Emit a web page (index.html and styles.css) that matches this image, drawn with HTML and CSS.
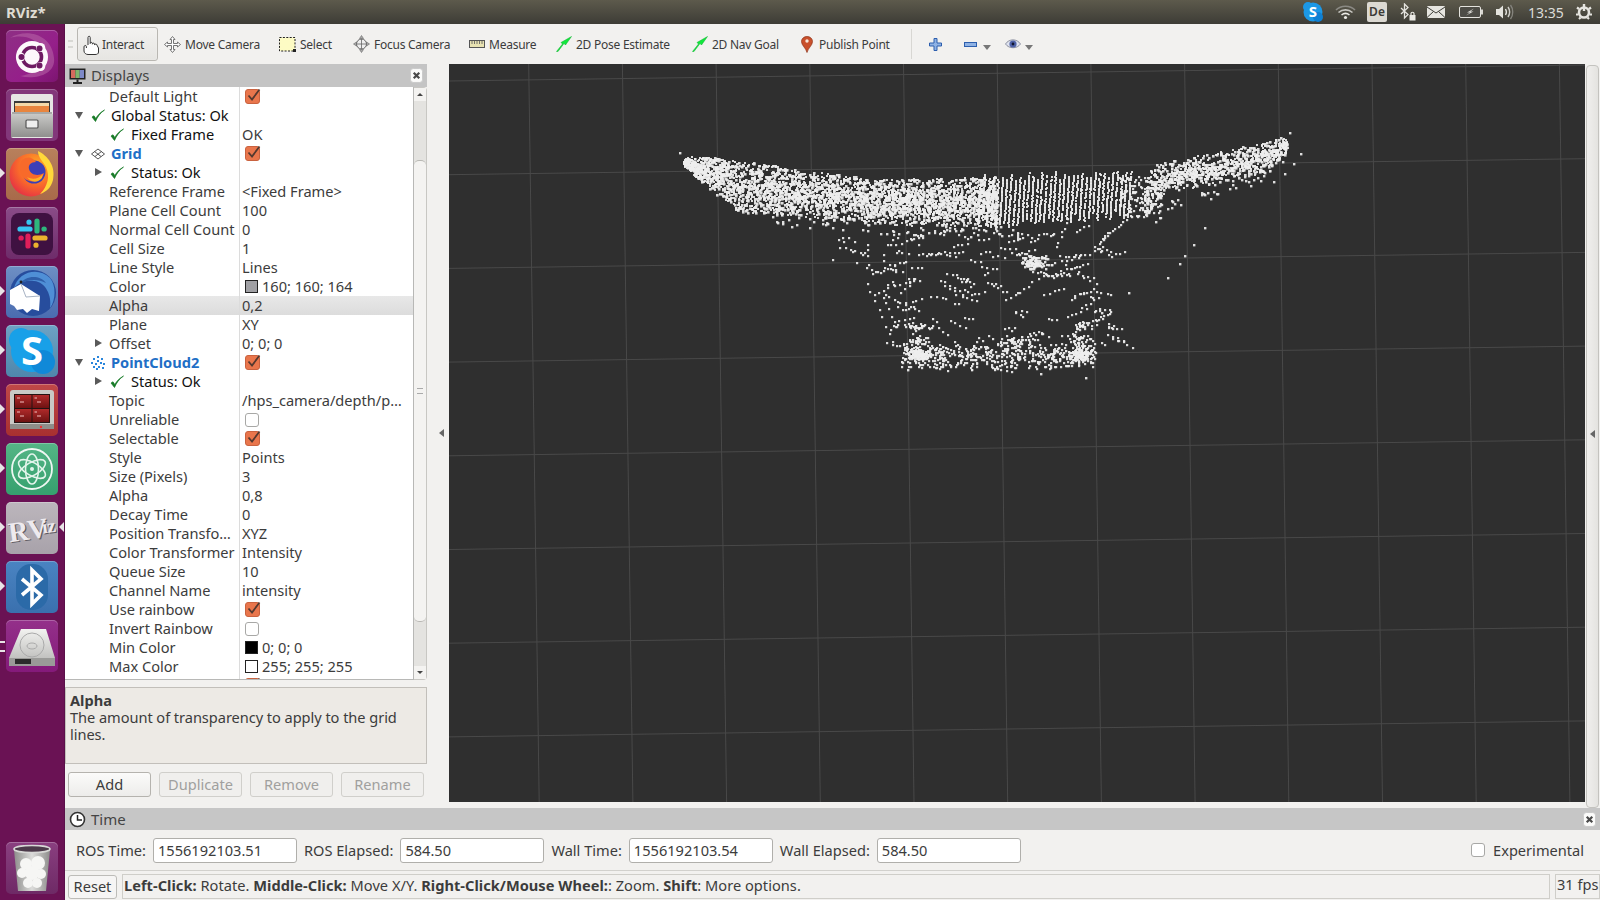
FILE: index.html
```html
<!DOCTYPE html>
<html lang="en">
<head>
<meta charset="utf-8">
<title>RViz*</title>
<link rel="stylesheet" href="styles.css">
</head>
<body>
<svg class="sprite" width="0" height="0" aria-hidden="true">
  <symbol id="cb-on" viewBox="0 0 16 16">
    <rect x="0.5" y="1.5" width="14" height="14" rx="2.5" fill="#e9764c" stroke="#c9623f"/>
    <path d="M3.5 7.5 L7 11.5 L14.5 1.5" fill="none" stroke="#54392f" stroke-width="1.8"/>
  </symbol>
  <symbol id="ok" viewBox="0 0 14 14">
    <path d="M1 8 L4.5 12.5 C6.5 8 9 4 13.5 1 C9 3.5 6.5 6.5 4.8 9.5 L3 6.8 Z" fill="#157a25" stroke="#157a25" stroke-width=".7"/>
  </symbol>
  <symbol id="close" viewBox="0 0 14 16">
    <rect x=".5" y=".5" width="13" height="15" rx="3" fill="#fbfbfa" stroke="#c8c8c8"/>
    <path d="M4 5 L10 11 M10 5 L4 11" stroke="#4a4a4a" stroke-width="2.4"/>
  </symbol>
  <symbol id="pose" viewBox="0 0 16 16">
    <path d="M0.5 15.5 L6.5 8 L5 6.5 L15.5 .5 L9.5 9 L8 7.5 L2 15.5 Z" fill="#11e83c" stroke="#0bb02c" stroke-width=".5"/>
  </symbol>
</svg>

<header class="topbar">
  <span class="wintitle">RViz*</span>
  <div class="tray">
    <svg class="tray-skype" width="22" height="22" viewBox="0 0 22 22"><circle cx="11" cy="11" r="9.5" fill="#1c98e6"/><circle cx="6" cy="6" r="5" fill="#1c98e6"/><circle cx="16" cy="16" r="5" fill="#0e80d4"/><text x="11" y="16" text-anchor="middle" class="svg-s">S</text></svg>
    <svg class="tray-wifi" width="21" height="16" viewBox="0 0 21 16"><g fill="none" stroke-width="1.6"><path d="M1 6 C6 1 15 1 20 6" stroke="#8b8a84"/><path d="M3.5 8.5 C7.5 5 13.5 5 17.5 8.5" stroke="#c8c7c2"/><path d="M6.5 11 C9 9 12 9 14.5 11" stroke="#ecebe6"/></g><circle cx="10.5" cy="13.5" r="1.6" fill="#ecebe6"/></svg>
    <span class="tray-lang">De</span>
    <svg class="tray-bt" width="16" height="18" viewBox="0 0 16 18"><path d="M1 5 L8 11.5 L4.5 15 V1 L8 4.5 L1 11" fill="none" stroke="#e4e3de" stroke-width="1.3"/><rect x="9.5" y="12" width="6" height="5.5" fill="#ecebe6"/><path d="M11 12 V10.5 C11 8.8 14 8.8 14 10.5 V12" fill="none" stroke="#ecebe6" stroke-width="1.2"/></svg>
    <svg class="tray-mail" width="18" height="12" viewBox="0 0 18 12"><rect width="18" height="12" rx="1" fill="#e6e5e0"/><path d="M0 1 L9 7 L18 1 M0 11.5 L6.5 5.5 M18 11.5 L11.5 5.5" fill="none" stroke="#3f3e38" stroke-width="1"/></svg>
    <svg class="tray-bat" width="24" height="12" viewBox="0 0 24 12"><rect x=".5" y=".5" width="21" height="11" rx="1.5" fill="#4d4c46" stroke="#e4e3de"/><rect x="22" y="3.5" width="2" height="5" fill="#d8d7d2"/><path d="M15 2.5 L8 6.5 L11 6.5 L7 9.5 L14.5 5.5 L11.5 5.5 Z" fill="#dcdbd6"/></svg>
    <svg class="tray-vol" width="19" height="16" viewBox="0 0 19 16"><path d="M1 5 H4 L8 1.5 V14.5 L4 11 H1 Z" fill="#e4e3de"/><g fill="none"><path d="M10.5 5 C11.7 7 11.7 9 10.5 11" stroke="#e4e3de" stroke-width="1.4"/><path d="M13 3 C15 6 15 10 13 13" stroke="#d0cfca" stroke-width="1.4"/><path d="M15.5 1 C18.5 5 18.5 11 15.5 15" stroke="#85847e" stroke-width="1.3"/></g></svg>
    <span class="clock">13:35</span>
    <svg class="tray-gear" width="16" height="16" viewBox="0 0 16 16"><circle cx="8" cy="8.5" r="5" fill="none" stroke="#e6e5e0" stroke-width="2.6"/><rect x="6.8" y="0" width="2.4" height="7" fill="#e6e5e0"/><path d="M1 3.5 L3 5 M15 3.5 L13 5 M0 10.5 H2 M14 10.5 H16 M3 15 L4.5 13.5 M13 15 L11.5 13.5" stroke="#e6e5e0" stroke-width="2.2"/></svg>
  </div>
</header>

<div class="desktop">
  <nav class="launcher">
    <div class="tile tile-ubuntu"><svg viewBox="0 0 52 52"><path d="M4 8 C20 -2 46 4 48 28 C50 44 30 50 14 46 C28 44 40 36 36 20 C32 8 16 4 4 8Z" fill="#b866a8" opacity=".55"/><circle cx="26" cy="27" r="16" fill="#fdf8fb"/><circle cx="26" cy="27" r="9.5" fill="none" stroke="#6e1a62" stroke-width="3.6"/><g fill="#fdf8fb"><circle cx="34.6" cy="17.5" r="4.6"/><circle cx="34.6" cy="36.5" r="4.6"/><circle cx="14.5" cy="27" r="4.6"/></g><g fill="#6e1a62"><circle cx="33.5" cy="18.5" r="3"/><circle cx="33.5" cy="35.5" r="3"/><circle cx="15.5" cy="27" r="3"/></g></svg></div>
    <div class="tile tile-files"><svg viewBox="0 0 52 52"><defs><linearGradient id="cab" x1="0" y1="0" x2="0" y2="1"><stop offset="0" stop-color="#c9c9c7"/><stop offset="1" stop-color="#8f8f8d"/></linearGradient></defs><rect x="5" y="5" width="42" height="44" rx="2" fill="#e6e6e4"/><rect x="8" y="12" width="36" height="12" fill="#3a3a3a"/><rect x="9" y="14" width="34" height="3" fill="#f4d9a8"/><rect x="9" y="17" width="34" height="6" fill="#e8853e"/><path d="M6 23 H46 L47 48 H5 Z" fill="#a9a9a7"/><rect x="5" y="25" width="42" height="23" fill="url(#cab)"/><rect x="20" y="31" width="12" height="8" rx="1" fill="#eee" stroke="#555" stroke-width="1.2"/></svg></div>
    <div class="tile tile-firefox running"><svg viewBox="0 0 52 52"><defs><radialGradient id="ff" cx=".65" cy=".3" r=".85"><stop offset="0" stop-color="#ffb022"/><stop offset=".55" stop-color="#f8662c"/><stop offset="1" stop-color="#e0224c"/></radialGradient></defs><circle cx="25" cy="27" r="21.5" fill="url(#ff)"/><path d="M32 3 C42 8 50 18 47 32 C45 40 40 44 34 46 C42 38 44 28 40 19 C37 13 32 10 32 3Z" fill="#ffd83a"/><circle cx="28" cy="24" r="11.5" fill="#3b3fb8"/><path d="M16 12 C22 8 26 9 30 14 C25 14 22 17 23 21 C25 28 33 28 38 25 C36 33 26 36 19 31 C13 26 12 17 16 12Z" fill="#f86a2a"/><path d="M21 29 C26 32 33 31 37 26 L36 30 C32 35 25 35 21 29Z" fill="#ffb125"/></svg></div>
    <div class="tile tile-slack"><svg viewBox="0 0 52 52"><rect x="5" y="6" width="42" height="42" rx="8" fill="#3f1141"/><g fill="none" stroke-width="5.2" stroke-linecap="round"><path d="M14 22 H24 M23 15 V15.2" stroke="#36c5f0"/><path d="M31 14 V24 M38 22 H38.2" stroke="#2eb67d"/><path d="M29 31 H39 M30 38 V38.2" stroke="#ecb22e"/><path d="M22 29 V39 M15 31 H15.2" stroke="#e01e5a"/></g></svg></div>
    <div class="tile tile-bird running"><svg viewBox="0 0 52 52"><circle cx="27" cy="27" r="23" fill="#274d9d"/><path d="M8 22 C12 6 32 0 44 12 C50 19 50 34 44 42 C46 30 40 16 28 15 C20 14 13 16 8 22Z" fill="#4f8fd6"/><path d="M14 18 C20 9 34 9 40 17 C32 13 22 13 14 18Z" fill="#2f5faa"/><path d="M4 24 L15 18 L34 30 L33 45 L26 43 L21 47 L17 43 L11 44 L8 40 L4 38Z" fill="#fff"/><path d="M15 18 L20 31 L34 30" fill="none" stroke="#a8b3c4" stroke-width="1"/><circle cx="15" cy="16" r="1.4" fill="#222"/></svg></div>
    <div class="tile tile-skype running"><svg viewBox="0 0 52 52"><circle cx="26" cy="26" r="21" fill="#18a0e8"/><circle cx="15" cy="15" r="12" fill="#18a0e8"/><circle cx="37" cy="37" r="12" fill="#1089d8"/><text x="26" y="40" text-anchor="middle" class="svg-s big">S</text></svg></div>
    <div class="tile tile-term running"><svg viewBox="0 0 52 52"><defs><linearGradient id="pane" x1="0" y1="0" x2="0" y2="1"><stop offset="0" stop-color="#b02a2a"/><stop offset="1" stop-color="#6e1212"/></linearGradient></defs><rect x="4" y="6" width="44" height="39" rx="3" fill="#c9c9c5"/><rect x="4" y="40" width="44" height="5" fill="#8e8e8a"/><rect x="8" y="10" width="36" height="29" fill="#241313"/><g fill="url(#pane)"><rect x="9" y="11" width="16.5" height="13"/><rect x="26.5" y="11" width="16.5" height="13"/><rect x="9" y="25" width="16.5" height="13"/><rect x="26.5" y="25" width="16.5" height="13"/></g><g stroke="#f0c0c0" stroke-width="1"><path d="M11 14 H14 M14 18 H18 M28.5 14 H31 M31 18 H35 M11 28 H14 M14 32 H18 M28.5 28 H31 M31 32 H35"/></g><circle cx="35" cy="43" r="1.2" fill="#e33"/></svg></div>
    <div class="tile tile-atom running"><svg viewBox="0 0 52 52"><circle cx="26" cy="26" r="20" fill="none" stroke="#eef7f2" stroke-width="1.8"/><g fill="none" stroke="#e4f5ec" stroke-width="1.6"><ellipse cx="26" cy="26" rx="6.5" ry="15"/><ellipse cx="26" cy="26" rx="6.5" ry="15" transform="rotate(60 26 26)"/><ellipse cx="26" cy="26" rx="6.5" ry="15" transform="rotate(-60 26 26)"/></g><circle cx="26" cy="26" r="2" fill="#e4f5ec"/></svg></div>
    <div class="tile tile-rviz running open"><svg viewBox="0 0 52 52"><g transform="rotate(-8 26 26)"><text x="3" y="38" class="svg-rviz shadow">RV</text><text x="37" y="34" class="svg-rviz small shadow">iz</text><text x="2" y="37" class="svg-rviz">RV</text><text x="36" y="33" class="svg-rviz small">iz</text></g></svg></div>
    <div class="tile tile-bt running"><svg viewBox="0 0 52 52"><rect x="10" y="3" width="32" height="46" rx="15" fill="#2b6aa8"/><path d="M16 18 L35 34 L26 43 V9 L35 18 L16 34" fill="none" stroke="#fff" stroke-width="3.6"/></svg></div>
    <div class="tile tile-disk two"><svg viewBox="0 0 52 52"><defs><linearGradient id="hd" x1="0" y1="0" x2="0" y2="1"><stop offset="0" stop-color="#f2f2f0"/><stop offset="1" stop-color="#b8b8b6"/></linearGradient></defs><path d="M15 9 H40 L49 38 V44 H3 V38 Z" fill="url(#hd)"/><rect x="3" y="38" width="46" height="8" fill="#9a9a98"/><rect x="9" y="39" width="16" height="5" fill="#2b2b2b"/><circle cx="26" cy="25" r="12" fill="none" stroke="#aaa" stroke-width="1"/><ellipse cx="26" cy="26" rx="5" ry="3" fill="none" stroke="#aaa"/></svg></div>
    <div class="tile tile-trash"><svg viewBox="0 0 52 52"><defs><linearGradient id="bin" x1="0" y1="0" x2="1" y2="0"><stop offset="0" stop-color="#8d8d8b"/><stop offset=".5" stop-color="#dcdcda"/><stop offset="1" stop-color="#8d8d8b"/></linearGradient></defs><path d="M8 8 H44 L40 49 H12 Z" fill="url(#bin)"/><ellipse cx="26" cy="7" rx="18" ry="3.5" fill="#4c3a4a" stroke="#d8d8d6" stroke-width="1.6"/><g fill="#f6f6f4"><circle cx="20" cy="22" r="6"/><circle cx="32" cy="21" r="7"/><circle cx="16" cy="31" r="5"/><circle cx="26" cy="31" r="7"/><circle cx="35" cy="32" r="5"/><circle cx="22" cy="41" r="5"/><circle cx="31" cy="41" r="5"/></g></svg></div>
  </nav>

  <main class="app">
    <div class="toolbar">
      <span class="grip"></span>
      <button class="tool active"><svg width="17" height="20" viewBox="0 0 17 20"><path d="M5 10 V2.5 C5 .8 7.2 .8 7.2 2.5 V8.5 C7.2 7 9.4 7 9.4 8.5 V9.2 C9.4 7.8 11.6 7.8 11.6 9.2 V10 C11.6 8.8 14 8.8 14 10.2 L15.5 13 V17 C15.5 19 14 19.5 12 19.5 H5 C3 19.5 1 18 1 16 V11.8 C1 10.3 3.2 10 3.4 11.5 V13" fill="#fff" stroke="#333" stroke-width="1"/></svg>Interact</button>
      <button class="tool t-move"><svg width="17" height="17" viewBox="0 0 17 17"><path d="M8.5 .5 L11 3.5 H9.5 V7.5 H13.5 V6 L16.5 8.5 L13.5 11 V9.5 H9.5 V13.5 H11 L8.5 16.5 L6 13.5 H7.5 V9.5 H3.5 V11 L.5 8.5 L3.5 6 V7.5 H7.5 V3.5 H6 Z" fill="#fff" stroke="#666" stroke-width=".9"/></svg>Move Camera</button>
      <button class="tool t-select"><svg width="17" height="15" viewBox="0 0 17 15"><rect x=".5" y=".5" width="15.5" height="13.5" fill="#fdfbc4" stroke="#222" stroke-dasharray="2 1.4"/><rect x="14" y="12" width="3" height="3" fill="#222"/></svg>Select</button>
      <button class="tool t-focus"><svg width="17" height="18" viewBox="0 0 17 18"><circle cx="8.5" cy="9" r="5" fill="#eee" stroke="#666"/><path d="M8.5 .5 L10.5 3.5 H6.5 Z M8.5 17.5 L10.5 14.5 H6.5 Z M.5 9 L3.5 7 V11 Z M16.5 9 L13.5 7 V11 Z" fill="#aaa" stroke="#666" stroke-width=".6"/><path d="M8.5 4 V14 M3.5 9 H13.5" stroke="#666" stroke-width=".8"/></svg>Focus Camera</button>
      <button class="tool t-measure"><svg width="16" height="8" viewBox="0 0 16 8"><rect x=".5" y=".5" width="15" height="7" fill="#e8e2b2" stroke="#555"/><path d="M3 1 V4 M5.5 1 V4 M8 1 V4 M10.5 1 V4 M13 1 V4" stroke="#555" stroke-width=".8"/></svg>Measure</button>
      <button class="tool t-pose"><svg width="16" height="16"><use href="#pose"/></svg>2D Pose Estimate</button>
      <button class="tool t-nav"><svg width="16" height="16"><use href="#pose"/></svg>2D Nav Goal</button>
      <button class="tool t-pin"><svg width="12" height="17" viewBox="0 0 12 17"><path d="M6 16.5 C5 12 .5 9.5 .5 5.5 C.5 2.5 3 .5 6 .5 C9 .5 11.5 2.5 11.5 5.5 C11.5 9.5 7 12 6 16.5Z" fill="#c9502c" stroke="#8f3418" stroke-width=".7"/><circle cx="6" cy="5" r="1.7" fill="#f7e9dc"/></svg>Publish Point</button>
      <span class="tool-sep"></span>
      <svg class="t-plus" width="13" height="13" viewBox="0 0 13 13"><path d="M5 .5 H8 V5 H12.5 V8 H8 V12.5 H5 V8 H.5 V5 H5 Z" fill="#8fb2e4" stroke="#2d5fae"/></svg>
      <svg class="t-minus" width="13" height="5" viewBox="0 0 13 5"><rect x=".5" y=".5" width="12" height="4" fill="#8fb2e4" stroke="#2d5fae"/></svg>
      <span class="drop t-drop1"></span>
      <svg class="t-eye" width="16" height="12" viewBox="0 0 16 12"><path d="M.5 6 C4 .5 12 .5 15.5 6 C12 11 4 11 .5 6Z" fill="#dfe3ef" stroke="#8c90a0"/><circle cx="8" cy="6" r="3.6" fill="#4f62a8"/><circle cx="8" cy="6" r="1.4" fill="#10152e"/></svg>
      <span class="drop t-drop2"></span>
    </div>

    <div class="work">
      <section class="sidebar">
        <div class="dock-head">
          <svg class="dock-icon" width="17" height="16" viewBox="0 0 17 16"><rect x=".5" y=".5" width="16" height="11" fill="#222"/><rect x="2" y="2" width="4.4" height="8" fill="#d56a5e"/><rect x="6.4" y="2" width="4.3" height="8" fill="#7fb46c"/><rect x="10.7" y="2" width="4.3" height="8" fill="#7d89c8"/><path d="M8.5 11.5 V14 M4 15 H13" stroke="#222" stroke-width="2"/></svg>
          <span class="dock-title">Displays</span>
          <svg class="dock-close" width="13" height="15"><use href="#close"/></svg>
        </div>
        <div class="tree-wrap">
          <div class="tree">
            <div class="row"><div class="name"><span class="lbl plain">Default Light</span></div><div class="val"><svg class="cb"><use href="#cb-on"/></svg></div></div>
            <div class="row"><div class="name"><i class="tw down"></i><svg class="okm"><use href="#ok"/></svg><span class="lbl st0">Global Status: Ok</span></div><div class="val"></div></div>
            <div class="row"><div class="name"><i class="tw"></i><i class="tw"></i><svg class="okm"><use href="#ok"/></svg><span class="lbl st1">Fixed Frame</span></div><div class="val">OK</div></div>
            <div class="row"><div class="name"><i class="tw down"></i><svg class="dicon" viewBox="0 0 14 11"><path d="M7 .5 L13.5 5.5 L7 10.5 L.5 5.5 Z M3.5 3 L10 8 M10.5 3 L4 8" fill="none" stroke="#444" stroke-width=".9"/></svg><span class="lbl blue">Grid</span></div><div class="val"><svg class="cb"><use href="#cb-on"/></svg></div></div>
            <div class="row"><div class="name"><i class="tw"></i><i class="tw right"></i><svg class="okm"><use href="#ok"/></svg><span class="lbl st1">Status: Ok</span></div><div class="val"></div></div>
            <div class="row"><div class="name"><span class="lbl plain">Reference Frame</span></div><div class="val">&lt;Fixed Frame&gt;</div></div>
            <div class="row"><div class="name"><span class="lbl plain">Plane Cell Count</span></div><div class="val">100</div></div>
            <div class="row"><div class="name"><span class="lbl plain">Normal Cell Count</span></div><div class="val">0</div></div>
            <div class="row"><div class="name"><span class="lbl plain">Cell Size</span></div><div class="val">1</div></div>
            <div class="row"><div class="name"><span class="lbl plain">Line Style</span></div><div class="val">Lines</div></div>
            <div class="row"><div class="name"><span class="lbl plain">Color</span></div><div class="val"><i class="swatch sw-grey"></i>160; 160; 164</div></div>
            <div class="row sel"><div class="name"><span class="lbl plain">Alpha</span></div><div class="val">0,2</div></div>
            <div class="row"><div class="name"><span class="lbl plain">Plane</span></div><div class="val">XY</div></div>
            <div class="row"><div class="name"><i class="tw"></i><i class="tw right"></i><span class="lbl sub">Offset</span></div><div class="val">0; 0; 0</div></div>
            <div class="row"><div class="name"><i class="tw down"></i><svg class="dicon" viewBox="0 0 14 14"><g fill="#2a86dc"><rect x="6" y="0" width="2" height="2"/><rect x="2" y="2" width="2" height="2"/><rect x="10" y="2" width="2" height="2"/><rect x="6" y="4" width="2" height="2"/><rect x="0" y="6" width="2" height="2"/><rect x="4" y="7" width="2" height="2"/><rect x="9" y="6" width="2" height="2"/><rect x="12" y="7" width="2" height="2"/><rect x="2" y="10" width="2" height="2"/><rect x="7" y="10" width="2" height="2"/><rect x="11" y="11" width="2" height="2"/><rect x="5" y="12" width="2" height="2"/></g></svg><span class="lbl blue">PointCloud2</span></div><div class="val"><svg class="cb"><use href="#cb-on"/></svg></div></div>
            <div class="row"><div class="name"><i class="tw"></i><i class="tw right"></i><svg class="okm"><use href="#ok"/></svg><span class="lbl st1">Status: Ok</span></div><div class="val"></div></div>
            <div class="row"><div class="name"><span class="lbl plain">Topic</span></div><div class="val">/hps_camera/depth/p…</div></div>
            <div class="row"><div class="name"><span class="lbl plain">Unreliable</span></div><div class="val"><i class="cb-off"></i></div></div>
            <div class="row"><div class="name"><span class="lbl plain">Selectable</span></div><div class="val"><svg class="cb"><use href="#cb-on"/></svg></div></div>
            <div class="row"><div class="name"><span class="lbl plain">Style</span></div><div class="val">Points</div></div>
            <div class="row"><div class="name"><span class="lbl plain">Size (Pixels)</span></div><div class="val">3</div></div>
            <div class="row"><div class="name"><span class="lbl plain">Alpha</span></div><div class="val">0,8</div></div>
            <div class="row"><div class="name"><span class="lbl plain">Decay Time</span></div><div class="val">0</div></div>
            <div class="row"><div class="name"><span class="lbl plain">Position Transfo…</span></div><div class="val">XYZ</div></div>
            <div class="row"><div class="name"><span class="lbl plain">Color Transformer</span></div><div class="val">Intensity</div></div>
            <div class="row"><div class="name"><span class="lbl plain">Queue Size</span></div><div class="val">10</div></div>
            <div class="row"><div class="name"><span class="lbl plain">Channel Name</span></div><div class="val">intensity</div></div>
            <div class="row"><div class="name"><span class="lbl plain">Use rainbow</span></div><div class="val"><svg class="cb"><use href="#cb-on"/></svg></div></div>
            <div class="row"><div class="name"><span class="lbl plain">Invert Rainbow</span></div><div class="val"><i class="cb-off"></i></div></div>
            <div class="row"><div class="name"><span class="lbl plain">Min Color</span></div><div class="val"><i class="swatch sw-black"></i>0; 0; 0</div></div>
            <div class="row"><div class="name"><span class="lbl plain">Max Color</span></div><div class="val"><i class="swatch sw-white"></i>255; 255; 255</div></div>
            <div class="row"><div class="name"></div><div class="val"><svg class="cb"><use href="#cb-on"/></svg></div></div>
          </div>
          <div class="vscroll">
            <span class="sb-arrow up"></span>
            <div class="sb-thumb"><span class="sb-grip"></span></div>
            <span class="sb-arrow dn"></span>
          </div>
        </div>
        <div class="desc">
          <strong>Alpha</strong>
          <p>The amount of transparency to apply to the grid lines.</p>
        </div>
        <div class="btns">
          <button class="btn">Add</button>
          <button class="btn off">Duplicate</button>
          <button class="btn off">Remove</button>
          <button class="btn off">Rename</button>
        </div>
      </section>
      <div class="split split-left"><i class="tri-left"></i></div>
      <div class="view"><canvas id="cloud" width="1136" height="738"></canvas></div>
      <div class="split split-right"><div class="handle"><i class="tri-left"></i></div></div>
    </div>

    <section class="time">
      <div class="time-head">
        <svg class="clock-ic" width="17" height="17" viewBox="0 0 17 17"><circle cx="8.5" cy="8.5" r="7" fill="#fff" stroke="#333" stroke-width="1.6"/><path d="M8.5 4 V9 H13" fill="none" stroke="#222" stroke-width="1.5"/></svg>
        <span class="dock-title">Time</span>
        <svg class="time-close" width="13" height="15"><use href="#close"/></svg>
      </div>
      <div class="time-row">
        <label class="tl">ROS Time:</label><span class="inp">1556192103.51</span>
        <label class="tl">ROS Elapsed:</label><span class="inp">584.50</span>
        <label class="tl">Wall Time:</label><span class="inp">1556192103.54</span>
        <label class="tl">Wall Elapsed:</label><span class="inp">584.50</span>
        <span class="exp"><i class="cb-off"></i>Experimental</span>
      </div>
    </section>

    <footer class="status">
      <button class="reset">Reset</button>
      <div class="hint"><b>Left-Click:</b> Rotate. <b>Middle-Click:</b> Move X/Y. <b>Right-Click/Mouse Wheel:</b>: Zoom. <b>Shift</b>: More options.</div>
      <div class="fps">31 fps</div>
    </footer>
  </main>
</div>
<script src="cloud.js"></script>
</body>
</html>
```
FILE: styles.css
```css
* { box-sizing: border-box; }
html, body { margin: 0; padding: 0; }
body {
  width: 1600px; height: 900px; overflow: hidden;
  display: flex; flex-direction: column;
  font-family: "Noto Sans", "Open Sans", sans-serif;
  font-size: 14.6px; color: #3c3c3c; background: #f2f1ef;
}
i { display: block; font-style: normal; }
.sprite { position: absolute; }

/* top panel */
.topbar {
  height: 24px; flex: none; display: flex; align-items: center; justify-content: space-between;
  background: linear-gradient(#5d5a4c, #3d3c36); color: #dfdbd2; padding-left: 6px;
}
.wintitle { font-weight: 700; font-size: 15px; }
.tray { display: flex; align-items: center; height: 24px; padding-right: 8px; }
.tray-wifi { margin-left: 11px; }
.tray-lang {
  width: 20px; height: 20px; margin-left: 11px; background: #dcd9d2; color: #3c3b37; border-radius: 2px;
  font-size: 12px; font-weight: 600; text-align: center; line-height: 20px;
}
.tray-bt { margin-left: 13px; }
.tray-mail { margin-left: 11px; }
.tray-bat { margin-left: 14px; }
.tray-vol { margin-left: 12px; }
.clock { margin-left: 14px; width: 36px; font-size: 14px; color: #dcdcd8; }
.tray-gear { margin-left: 12px; }
.svg-s { font: 700 15px "Noto Sans", sans-serif; fill: #fff; }
.svg-s.big { font-size: 40px; }
.svg-rviz { font: 700 28px "Liberation Serif", serif; fill: #eeeaee; }
.svg-rviz.small { font-size: 19px; }
.svg-rviz.shadow { fill: #5e5a60; }

/* layout */
.desktop { flex: 1; display: flex; min-height: 0; }
.app { flex: 1; display: flex; flex-direction: column; min-width: 0; }

/* launcher */
.launcher {
  width: 65px; flex: none; display: flex; flex-direction: column; gap: 7px;
  padding: 6px 7px 6px 6px; background: #6a1254; border-right: 1px solid #5a0f49;
}
.tile { width: 52px; height: 52px; border-radius: 5px; position: relative; flex: none; box-shadow: inset 0 1px 0 rgba(255,255,255,.25); }
.tile > svg { display: block; width: 52px; height: 52px; }
.tile.running::before {
  content: ""; position: absolute; left: -6px; top: 20px;
  border-left: 5px solid #e8e4e6; border-top: 5px solid transparent; border-bottom: 5px solid transparent;
}
.tile.open::after {
  content: ""; position: absolute; right: -6px; top: 20px;
  border-right: 5px solid #e8e4e6; border-top: 5px solid transparent; border-bottom: 5px solid transparent;
}
.tile.two::before {
  content: ""; position: absolute; left: -6px; top: 21px; width: 5px; height: 7px;
  border-top: 2px solid #e8e4e6; border-bottom: 2px solid #e8e4e6;
}
.tile-ubuntu { background: linear-gradient(135deg, #8e2f84, #951f8a 60%, #7c1470); }
.tile-files { background: #82377a; }
.tile-firefox { background: linear-gradient(#b8805c, #a86a4a); }
.tile-slack { background: linear-gradient(#8a4c88, #6e2c6a); }
.tile-bird { background: linear-gradient(#6e8fc4, #4a6cb0); }
.tile-skype { background: linear-gradient(#6ea3c4, #4f86ab); }
.tile-term { background: linear-gradient(#c04848, #a83030); }
.tile-atom { background: linear-gradient(#55b586, #35a06e); }
.tile-rviz { background: linear-gradient(#bcb6bc, #a8a2aa); }
.tile-bt { background: linear-gradient(#4a84c2, #3a70ae); }
.tile-disk { background: linear-gradient(#94308a, #841a7a); }
.tile-trash { background: linear-gradient(#8a3f80, #6e2a66); margin-top: auto; }

/* toolbar */
.toolbar { height: 40px; flex: none; display: flex; align-items: center; background: #f2f1ef; position: relative; }
.grip { width: 5px; height: 8px; margin: 0 4px 0 3px; border-top: 2px solid #d8d8d4; border-bottom: 2px solid #d8d8d4; flex: none; }
.tool {
  display: flex; align-items: center; gap: 4px; height: 34px; padding: 0; background: none; border: 0;
  font: inherit; font-size: 12px; letter-spacing: -.25px; color: #3c3c3c; flex: none; white-space: nowrap;
}
.tool.active {
  width: 81px; padding-left: 5px; padding-top: 1px; gap: 2px; border: 1px solid #b9b7b2; border-radius: 3px;
  background: linear-gradient(#f3f2f0, #e6e5e2); box-shadow: inset 0 0 1px #fff;
}
.t-move { margin-left: 6px; width: 115px; }
.t-select { width: 74px; }
.t-focus { width: 116px; }
.t-measure { width: 87px; }
.t-pose { width: 136px; }
.t-nav { width: 109px; }
.t-pin { width: 110px; }
.t-pin svg { margin-right: 2px; }
.tool-sep { width: 1px; height: 30px; background: #d8d7d3; flex: none; }
.t-plus { margin-left: 17px; flex: none; }
.t-minus { margin-left: 22px; flex: none; }
.drop { width: 0; height: 0; border-left: 4px solid transparent; border-right: 4px solid transparent; border-top: 5px solid #777; margin-top: 6px; flex: none; }
.t-drop1 { margin-left: 6px; }
.t-eye { margin-left: 14px; flex: none; }
.t-drop2 { margin-left: 4px; }

/* work area */
.work { height: 744px; flex: none; display: flex; }
.sidebar { width: 362px; flex: none; display: flex; flex-direction: column; }
.dock-head {
  height: 23px; flex: none; display: flex; align-items: center; background: #c4c4c4; padding: 0 4px;
}
.dock-icon { margin-right: 5px; flex: none; }
.dock-title { font-size: 15px; color: #444; }
.dock-head .dock-title { padding-bottom: 2px; }
.dock-close { margin-left: auto; }
.tree-wrap { height: 593px; flex: none; display: flex; }
.tree { width: 349px; background: #fff; overflow: hidden; border-bottom: 1px solid #b8b8b6; border-right: 1px solid #b8b8b6; }
.row { height: 19px; display: grid; grid-template-columns: 174px 1fr; line-height: 19px; white-space: nowrap; }
.row.sel { background: linear-gradient(#e8e8e8, #dcdcdc); }
.name { display: flex; align-items: center; padding-left: 5px; overflow: hidden; }
.val { border-left: 1px solid #dcdcdc; padding-left: 2px; display: flex; align-items: center; overflow: hidden; }
.lbl.plain { margin-left: 39px; }
.lbl.sub { margin-left: 1px; }
.lbl.st0 { margin-left: 6px; color: #111; }
.lbl.st1 { margin-left: 7px; color: #111; }
.lbl.blue { margin-left: 3px; color: #1f6fc6; font-weight: 700; }
.tw { width: 19px; height: 19px; flex: none; position: relative; }
.tw.down::after {
  content: ""; position: absolute; left: 5px; top: 6px;
  border-top: 7px solid #5a5a5a; border-left: 4px solid transparent; border-right: 4px solid transparent;
}
.tw.right::after {
  content: ""; position: absolute; left: 6px; top: 5px;
  border-left: 7px solid #5a5a5a; border-top: 4px solid transparent; border-bottom: 4px solid transparent;
}
.okm { width: 14px; height: 14px; flex: none; margin-left: 2px; }
.dicon { width: 14px; height: 14px; flex: none; margin-left: 2px; margin-right: 3px; }
.cb { width: 16px; height: 16px; margin: 0 0 2px 3px; flex: none; }
.cb-off { width: 14px; height: 14px; margin-left: 3px; background: #fff; border: 1px solid #a8a8a6; border-radius: 3px; flex: none; }
.swatch { width: 13px; height: 13px; margin: 0 4px 0 3px; border: 1px solid #222; flex: none; }
.sw-grey { background: #a0a0a4; }
.sw-black { background: #000; }
.sw-white { background: #fff; }

.vscroll {
  width: 13px; flex: none; display: flex; flex-direction: column; align-items: center;
  background: #e4e3e0; border: 1px solid #c8c7c3; border-left: 0; border-radius: 0 4px 4px 0;
}
.sb-arrow { flex: none; height: 13px; width: 100%; position: relative; background: #f4f3f1; }
.sb-arrow::after { content: ""; position: absolute; left: 3px; border-left: 3px solid transparent; border-right: 3px solid transparent; }
.sb-arrow.up::after { top: 5px; border-bottom: 3px solid #444; }
.sb-arrow.dn::after { top: 5px; border-top: 3px solid #444; }
.sb-thumb {
  width: 100%; height: 462px; margin-top: 59px; margin-bottom: auto;
  background: #f4f3f1; border: 1px solid #b9b8b4; border-width: 1px 0; border-radius: 5px;
  display: flex; align-items: center; justify-content: center;
}
.sb-grip { width: 6px; height: 6px; border-top: 1px solid #aaa; border-bottom: 1px solid #aaa; }

.desc {
  height: 77px; flex: none; margin-top: 7px; padding: 4px 4px; background: #edeae5;
  border: 1px solid #c2bfba; line-height: 17px; color: #3c3c3c;
}
.desc strong { display: block; }
.desc p { margin: 0; letter-spacing: -.05px; }
.btns { display: flex; gap: 8px; margin-top: 8px; padding-left: 3px; }
.btn {
  width: 83px; height: 25px; padding: 0 0 2px; font: inherit; color: #3c3c3c;
  border: 1px solid #b5b3ae; border-radius: 3px; background: linear-gradient(#fbfbfa, #edecea);
}
.btn.off { color: #a0a09e; border-color: #d0cfcb; background: #f0efed; }

.split { flex: none; display: flex; align-items: center; position: relative; }
.split-left { width: 22px; justify-content: center; padding-left: 6px; }
.split-right { width: 15px; padding: 1px 1px 0 1px; }
.tri-left { width: 0; height: 0; margin-bottom: 6px; border-right: 5px solid #666; border-top: 4px solid transparent; border-bottom: 4px solid transparent; }
.handle {
  width: 100%; height: 100%; display: flex; align-items: center; justify-content: center;
  border: 1px solid #c4c3bf; border-radius: 4px; background: linear-gradient(90deg, #f0efed, #e4e3e0);
}
.view { width: 1136px; height: 738px; flex: none; background: #2f2f2f; }
.view canvas { display: block; }

/* time panel */
.time { flex: none; }
.time-head { height: 22px; display: flex; align-items: center; background: #c6c6c6; padding: 0 4px; }
.clock-ic { margin-right: 5px; }
.time-close { margin-left: auto; }
.time-row { height: 40px; display: flex; align-items: center; padding: 0 16px 0 11px; background: #f2f1ef; }
.tl { margin-right: 7px; }
.inp {
  width: 144px; height: 25px; margin-right: 7px; padding-left: 4px; line-height: 22px;
  background: #fff; border: 1px solid #b0afab; border-radius: 3px;
}
.exp { margin-left: auto; display: flex; align-items: center; gap: 8px; }

.status { flex: 1; display: flex; gap: 5px; padding: 3px 0 3px 3px; border-top: 1px solid #d2d1cd; background: #f2f1ef; }
.reset { width: 49px; height: 24px; padding: 0 0 2px; margin-top: 1px; font: inherit; color: #3c3c3c; border: 1px solid #bdbcb8; border-radius: 3px; background: #f6f5f4; }
.hint { flex: 1; border: 1px solid #cfcec9; padding-left: 1px; line-height: 21px; letter-spacing: .03px; color: #3c3c3c; white-space: nowrap; }
.fps { width: 45px; border: 1px solid #cfcec9; padding-left: 1px; line-height: 19px; white-space: nowrap; overflow: hidden; }
```
FILE: cloud.js
```js
(function () {
  var c = document.getElementById('cloud'), g = c.getContext('2d');
  var OX = 449, OY = 64;
  var seed = 20190425;
  function R() {
    seed |= 0; seed = seed + 0x6D2B79F5 | 0;
    var t = Math.imul(seed ^ seed >>> 15, 1 | seed);
    t = t + Math.imul(t ^ t >>> 7, 61 | t) ^ t;
    return ((t ^ t >>> 14) >>> 0) / 4294967296;
  }
  function rng(a, b) { return a + (b - a) * R(); }
  function gauss() { return (R() + R() + R() - 1.5) / 1.5; }

  // grid
  g.strokeStyle = '#494949'; g.lineWidth = 1;
  for (var i = 0; i < 12; i++) {
    var tx = 528.7 + 93.7 * i;
    g.beginPath(); g.moveTo(tx - OX, 0); g.lineTo(tx + 10.5 - OX, 738); g.stroke();
  }
  for (var k = 0; k < 8; k++) {
    var y0 = 81 + 93.7 * k;
    g.beginPath(); g.moveTo(0, y0 - OY); g.lineTo(1136, y0 - 16 - OY); g.stroke();
  }

  // Coordinates below are in "sketch" units: X = 660 + x / 2.376, Y = 120 + y / 3
  function dot(x, y, s) {
    var X = 660 + x / 2.376 - OX, Y = 120 + y / 3 - OY, z = s || 2.4;
    g.fillRect(Math.round(X), Math.round(Y), z, z);
  }
  function lerp(a, x) {
    for (var i = 1; i < a.length; i++) {
      if (x <= a[i][0]) {
        var p = a[i - 1], q = a[i];
        return p[1] + (q[1] - p[1]) * (x - p[0]) / (q[0] - p[0]);
      }
    }
    return a[a.length - 1][1];
  }
  g.fillStyle = 'rgba(238,238,238,.92)';

  var up = [[55,108],[150,115],[300,145],[500,178],[700,176],[900,165],[1115,162]];
  var lo = [[55,140],[100,185],[180,268],[350,288],[550,308],[830,315],[1115,285]];
  var n, x, y, a, b, j;

  // left of the roof band: dense noise
  for (n = 0; n < 3300; n++) {
    x = rng(55, 800);
    a = lerp(up, x); b = lerp(lo, x);
    y = (a + b) / 2 + (b - a) / 2 * (R() < .45 ? gauss() * 1.15 : rng(-1.05, 1.05));
    dot(x, y, R() < .5 ? 2 : 2.6);
  }
  // roof band centre: vertical stripes
  for (x = 760; x < 1118; x += 10.5) {
    a = lerp(up, x) + rng(-12, 14); b = lerp(lo, x) + rng(-14, 8);
    for (y = a; y < b; y += 4.6) { if (R() < .94) dot(x + (y - a) * -.05 + rng(-1.2, 1.2), y + rng(-1, 1), 2); }
  }
  // scatter joining the band to the wing
  for (n = 0; n < 120; n++) { x = rng(1090, 1190); dot(x, rng(165, 290), 2.2); }
  // right wing
  var wu = [[1150,178],[1170,130],[1300,100],[1440,65],[1490,45]];
  var wl = [[1150,290],[1200,215],[1300,195],[1430,155],[1490,95]];
  for (n = 0; n < 900; n++) {
    x = rng(1150, 1490);
    a = lerp(wu, x); b = lerp(wl, x);
    y = (a + b) / 2 + (b - a) / 2 * (R() < .5 ? gauss() * 1.1 : rng(-1, 1));
    dot(x, y, R() < .5 ? 2 : 2.6);
  }
  // loose dots below the wing
  for (n = 0; n < 45; n++) { x = rng(1170, 1480); dot(x, lerp(wl, x) + rng(-5, 60) * (1 - (x - 1170) / 500), 2.4); }

  // stray points under the roof
  for (n = 0; n < 55; n++) { x = rng(260, 840); dot(x, lerp(lo, x) + rng(0, 32) + 4, 2.4); }

  // streaks of the interior
  function streak(x0, y0, dx, dy, m) {
    for (var t = 0; t < m; t++) dot(x0 + dx * t + rng(-3, 3), y0 + dy * t + rng(-3, 3), 2.2);
  }
  for (n = 0; n < 70; n++) {
    y = rng(325, 500);
    var f = (y - 325) / 175;
    x = rng(400 + f * 130, 1110 - f * 60);
    a = rng(-1, 1) * .6;
    streak(x, y, 11, 11 * a, 2 + Math.floor(R() * 4));
  }
  for (n = 0; n < 22; n++) { dot(rng(400, 620), rng(330, 450), 2.2); }
  for (n = 0; n < 55; n++) {
    y = rng(510, 670);
    x = rng(500, 1090);
    if (R() < .35) x = R() < .5 ? rng(530, 650) : rng(960, 1070);
    a = rng(-1, 1);
    streak(x, y, 11, 11 * a, 2 + Math.floor(R() * 4));
  }
  // struts
  streak(975, 280, -5, 14, 8);
  streak(1105, 295, -6, 7, 10);
  streak(1060, 340, -4, 8, 6);
  streak(950, 420, 14, 12, 7);
  streak(490, 490, 9, 25, 8);
  streak(530, 530, 6, 18, 6);

  // small bright blob
  for (n = 0; n < 90; n++) dot(888 + gauss() * 46, 425 + gauss() * 26);
  for (y = 338; y < 360; y += 6) dot(848, y, 2.2);

  // base of the box
  for (n = 0; n < 520; n++) {
    x = rng(572, 1036);
    y = 703 + (x < 800 ? (x - 572) * .05 : (1036 - x) * .05) + (R() < .6 ? gauss() * 50 : rng(-36, 36));
    dot(x, y, 2.2);
  }
  for (n = 0; n < 110; n++) dot(610 + gauss() * 40, 700 + gauss() * 24, 2.2);
  for (n = 0; n < 90; n++) dot(995 + gauss() * 40, 702 + gauss() * 24, 2.2);
  for (n = 0; n < 28; n++) dot(615 + gauss() * 40, 660 + gauss() * 22, 2.2);
  for (n = 0; n < 24; n++) dot(990 + gauss() * 40, 660 + gauss() * 26, 2.2);
  for (n = 0; n < 22; n++) dot(610 + gauss() * 45, 620 + gauss() * 18, 2.2);
  for (n = 0; n < 22; n++) dot(1005 + gauss() * 40, 615 + gauss() * 18, 2.2);
  for (n = 0; n < 55; n++) dot(830 + gauss() * 110, 660 + gauss() * 30, 2.2);

  // outliers
  [[45,97],[1205,472],[1233,428],[1245,406],[1267,373],[1293,322],[728,478],[1113,515],[1047,575],[587,748],[1010,770],[902,760],[1495,37],[1520,98],[1505,128],[1482,160],[1457,182]].forEach(function (p) { dot(p[0], p[1]); });
})();
```
